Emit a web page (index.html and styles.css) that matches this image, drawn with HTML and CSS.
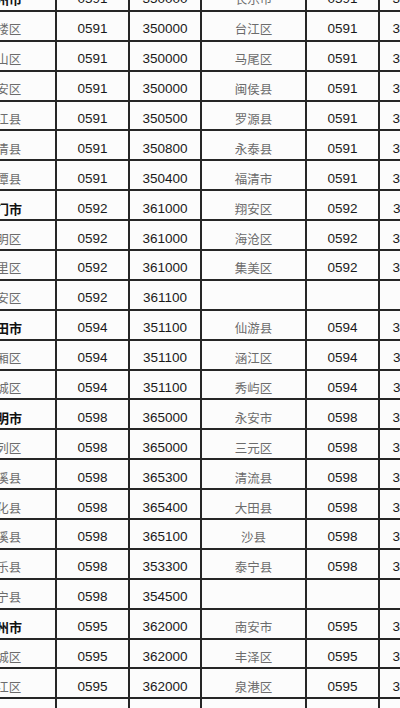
FILE: index.html
```html
<!DOCTYPE html>
<html lang="zh">
<head>
<meta charset="utf-8">
<link rel="stylesheet" href="styles.css">
</head>
<body>
<div class="sheet">
<table class="codes">
<colgroup><col class="c-name"><col class="c-code"><col class="c-zip"><col class="c-name2"><col class="c-code"><col class="c-zip2"></colgroup>
<tbody>
<tr><td class="city">福州市</td><td class="num">0591</td><td class="num">350000</td><td class="name">长乐市</td><td class="num">0591</td><td class="num">350200</td></tr>
<tr><td class="name">鼓楼区</td><td class="num">0591</td><td class="num">350000</td><td class="name">台江区</td><td class="num">0591</td><td class="num">350000</td></tr>
<tr><td class="name">仓山区</td><td class="num">0591</td><td class="num">350000</td><td class="name">马尾区</td><td class="num">0591</td><td class="num">350000</td></tr>
<tr><td class="name">晋安区</td><td class="num">0591</td><td class="num">350000</td><td class="name">闽侯县</td><td class="num">0591</td><td class="num">350100</td></tr>
<tr><td class="name">连江县</td><td class="num">0591</td><td class="num">350500</td><td class="name">罗源县</td><td class="num">0591</td><td class="num">350600</td></tr>
<tr><td class="name">闽清县</td><td class="num">0591</td><td class="num">350800</td><td class="name">永泰县</td><td class="num">0591</td><td class="num">350700</td></tr>
<tr><td class="name">平潭县</td><td class="num">0591</td><td class="num">350400</td><td class="name">福清市</td><td class="num">0591</td><td class="num">350300</td></tr>
<tr><td class="city">厦门市</td><td class="num">0592</td><td class="num">361000</td><td class="name">翔安区</td><td class="num">0592</td><td class="num">361100</td></tr>
<tr><td class="name">思明区</td><td class="num">0592</td><td class="num">361000</td><td class="name">海沧区</td><td class="num">0592</td><td class="num">361000</td></tr>
<tr><td class="name">湖里区</td><td class="num">0592</td><td class="num">361000</td><td class="name">集美区</td><td class="num">0592</td><td class="num">361000</td></tr>
<tr><td class="name">同安区</td><td class="num">0592</td><td class="num">361100</td><td></td><td></td><td></td></tr>
<tr><td class="city">莆田市</td><td class="num">0594</td><td class="num">351100</td><td class="name">仙游县</td><td class="num">0594</td><td class="num">351200</td></tr>
<tr><td class="name">城厢区</td><td class="num">0594</td><td class="num">351100</td><td class="name">涵江区</td><td class="num">0594</td><td class="num">351100</td></tr>
<tr><td class="name">荔城区</td><td class="num">0594</td><td class="num">351100</td><td class="name">秀屿区</td><td class="num">0594</td><td class="num">351100</td></tr>
<tr><td class="city">三明市</td><td class="num">0598</td><td class="num">365000</td><td class="name">永安市</td><td class="num">0598</td><td class="num">366000</td></tr>
<tr><td class="name">梅列区</td><td class="num">0598</td><td class="num">365000</td><td class="name">三元区</td><td class="num">0598</td><td class="num">365000</td></tr>
<tr><td class="name">明溪县</td><td class="num">0598</td><td class="num">365300</td><td class="name">清流县</td><td class="num">0598</td><td class="num">365300</td></tr>
<tr><td class="name">宁化县</td><td class="num">0598</td><td class="num">365400</td><td class="name">大田县</td><td class="num">0598</td><td class="num">366100</td></tr>
<tr><td class="name">尤溪县</td><td class="num">0598</td><td class="num">365100</td><td class="name">沙县</td><td class="num">0598</td><td class="num">365500</td></tr>
<tr><td class="name">将乐县</td><td class="num">0598</td><td class="num">353300</td><td class="name">泰宁县</td><td class="num">0598</td><td class="num">354400</td></tr>
<tr><td class="name">建宁县</td><td class="num">0598</td><td class="num">354500</td><td></td><td></td><td></td></tr>
<tr><td class="city">泉州市</td><td class="num">0595</td><td class="num">362000</td><td class="name">南安市</td><td class="num">0595</td><td class="num">362300</td></tr>
<tr><td class="name">鲤城区</td><td class="num">0595</td><td class="num">362000</td><td class="name">丰泽区</td><td class="num">0595</td><td class="num">362000</td></tr>
<tr><td class="name">洛江区</td><td class="num">0595</td><td class="num">362000</td><td class="name">泉港区</td><td class="num">0595</td><td class="num">362800</td></tr>
<tr><td class="name">惠安县</td><td class="num">0595</td><td class="num">362100</td><td class="name">石狮市</td><td class="num">0595</td><td class="num">362700</td></tr>
</tbody>
</table>
</div>
</body>
</html>
```

FILE: styles.css
```css
html, body {
  margin: 0;
  padding: 0;
  background: #fcfcfc;
}
body {
  width: 400px;
  height: 708px;
  overflow: hidden;
}
.sheet {
  width: 400px;
  height: 708px;
  overflow: hidden;
}
.codes {
  border-collapse: collapse;
  table-layout: fixed;
  width: 502px;
  margin-left: -52px;
  margin-top: -20px;
}
.c-name { width: 107px; }
.c-code { width: 73px; }
.c-zip { width: 72px; }
.c-name2 { width: 105px; }
.c-zip2 { width: 72px; }
.codes tr {
  height: 29.9px;
}
.codes td {
  border: 2px solid #262626;
  padding: 7px 0 0 0;
  text-align: center;
  vertical-align: middle;
  white-space: nowrap;
  line-height: 16px;
}
.num {
  font-family: "Liberation Sans", Arial, sans-serif;
  font-size: 13.5px;
  color: #1a1a1a;
}
.name {
  font-family: "Noto Sans CJK SC", sans-serif;
  font-size: 12.5px;
  font-weight: 400;
  color: #6c6c6c;
}
.city {
  font-family: "Noto Sans CJK SC", sans-serif;
  font-size: 13px;
  font-weight: 700;
  color: #111;
}
```
